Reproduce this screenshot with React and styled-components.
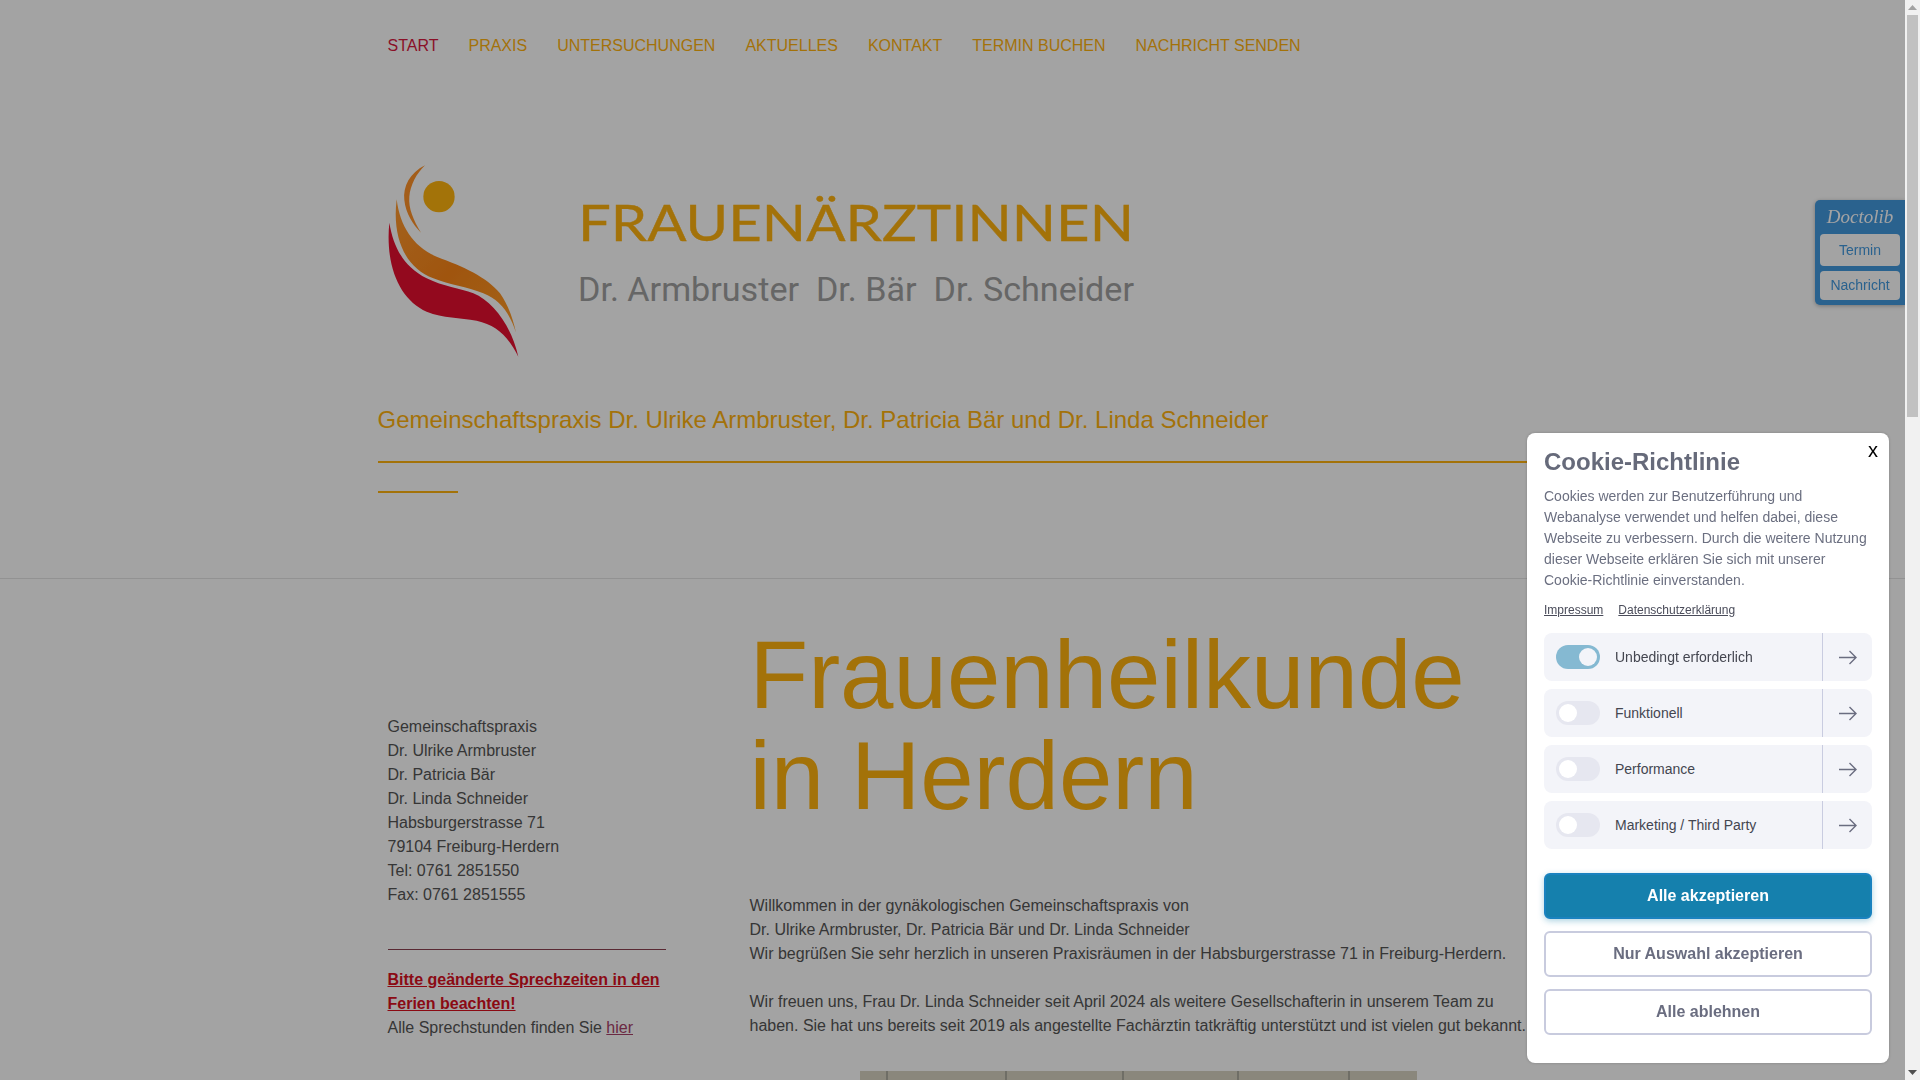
import React from "react";
import styled, { createGlobalStyle } from "styled-components";

const GlobalStyle = createGlobalStyle`
  body {
    margin: 0;
    background: #fff;
    color: #555;
    font-family: "Liberation Sans", Arial, sans-serif;
    font-size: 16px;
    line-height: 24px;
  }
`;

const Header = styled.header`
  padding-left: 377.5px;
  border-bottom: 1px solid #e4e4e4;
  height: 579px;
  box-sizing: border-box;
  overflow: hidden;
`;

const Nav = styled.nav`
  display: flex;
  gap: 30px;
  align-items: center;
  height: 92px;
  margin-left: 10px;
`;

const NavLink = styled.a`
  color: ${(p) => (p.$active ? "#d8193e" : "#ffb20f")};
  font-size: 16px;
  text-transform: uppercase;
`;

const LogoBox = styled.svg`
  display: block;
  width: 750px;
  height: 193px;
  margin: 73px 0 0 9.5px;
`;

const Claim = styled.h3`
  margin: 47px 0 0;
  color: #ffb20f;
  font-size: 24px;
  font-weight: normal;
  line-height: 30px;
`;

const Rule = styled.div`
  width: 1150px;
  margin-top: 26px;
  height: 2px;
  background: #ffb20f;
`;

const ShortRule = styled.div`
  margin-top: 28px;
  width: 80px;
  height: 2px;
  background: #ffb20f;
`;

const Content = styled.main`
  display: flex;
  padding-left: 377.5px;
`;

const Sidebar = styled.aside`
  width: 372px;
  box-sizing: border-box;
  padding: 136px 0 0 10px;
`;

const AddressLine = styled.div``;

const SideRule = styled.hr`
  width: 278px;
  margin: 42px 0 18px;
  border: 0;
  border-top: 1px solid #8c4050;
`;

const Notice = styled.strong`
  display: block;
  width: 279px;
  color: #d9101f;
  text-decoration: underline;
`;

const SoftLink = styled.a`
  color: #a84068;
  text-decoration: underline;
`;

const Article = styled.article`
  width: 780px;
  padding-top: 46px;
`;

const Title = styled.h1`
  margin: 0 0 67px;
  color: #ffb20f;
  font-size: 96px;
  font-weight: normal;
  line-height: 100.8px;
`;

const Paragraph = styled.p`
  margin: 0 0 24px;
`;

const Photo = styled.div`
  display: flex;
  width: 557px;
  height: 420px;
  margin: 33px 0 0 110.5px;
  background: #d8d4c2;
`;

const PhotoPane = styled.div`
  width: ${(p) => p.$w}px;
  box-sizing: border-box;
  border-right: 2px solid #aeada0;
`;

const Overlay = styled.div`
  position: fixed;
  inset: 0 15px 0 0;
  background: rgba(0, 0, 0, 0.36);
`;

const Doctolib = styled.div`
  position: fixed;
  top: 200px;
  right: 15px;
  display: flex;
  flex-direction: column;
  gap: 5px;
  width: 80px;
  padding: 0 5px 5px;
  border-radius: 5px 0 0 5px;
  background: #4299df;
  box-shadow: 0 1px 4px rgba(0, 0, 0, 0.3);
`;

const DoctolibName = styled.div`
  height: 29px;
  color: #fff;
  font-family: "Liberation Serif", serif;
  font-size: 19px;
  font-style: italic;
  line-height: 34px;
  text-align: center;
`;

const DoctolibButton = styled.a`
  display: block;
  height: ${(p) => p.$h}px;
  border-radius: 4px;
  background: #fff;
  color: #4299df;
  font-size: 14px;
  line-height: ${(p) => p.$h}px;
  text-align: center;
`;

const Modal = styled.div`
  position: fixed;
  right: 31px;
  bottom: 17px;
  width: 362px;
  height: 630px;
  box-sizing: border-box;
  padding: 13px 17px 0;
  border-radius: 8px;
  background: #fff;
  box-shadow: 0 0 3px rgba(0, 0, 0, 0.2);
`;

const Close = styled.button`
  position: absolute;
  top: 5px;
  right: 11px;
  padding: 0;
  border: 0;
  background: none;
  color: #000;
  font-family: "Liberation Sans", sans-serif;
  font-size: 20px;
  line-height: 24px;
`;

const ModalTitle = styled.h2`
  margin: 0;
  color: #666a7a;
  font-size: 24px;
  font-weight: bold;
  line-height: 32px;
`;

const ModalText = styled.p`
  margin: 8px 0 0;
  color: #6b6f80;
  font-size: 14px;
  line-height: 21px;
`;

const ModalLinks = styled.div`
  display: flex;
  gap: 15px;
  margin-top: 10px;
  font-size: 12px;
  line-height: 18px;
`;

const ModalLink = styled.a`
  color: #4a4c5a;
  text-decoration: underline;
`;

const Options = styled.div`
  display: flex;
  flex-direction: column;
  gap: 8px;
  margin-top: 14px;
`;

const OptionRow = styled.div`
  display: flex;
  align-items: center;
  height: 48px;
  border-radius: 8px;
  background: #f3f4f9;
`;

const Toggle = styled.span`
  display: flex;
  justify-content: ${(p) => (p.$on ? "flex-end" : "flex-start")};
  align-items: center;
  flex: none;
  width: 44px;
  height: 24px;
  box-sizing: border-box;
  margin-left: 12px;
  padding: 0 3px;
  border-radius: 12px;
  background: ${(p) => (p.$on ? "#85b9d2" : "#e6e7f0")};
`;

const Knob = styled.span`
  width: 18px;
  height: 18px;
  border-radius: 50%;
  background: ${(p) => (p.$on ? "#f3f4f9" : "#fff")};
`;

const OptionLabel = styled.span`
  flex: 1;
  margin-left: 15px;
  color: #444650;
  font-size: 14px;
`;

const OptionArrow = styled.span`
  display: flex;
  justify-content: center;
  align-items: center;
  width: 49px;
  height: 100%;
  border-left: 1px solid #c9cce0;
  color: #6a6d80;
`;

const Actions = styled.div`
  display: flex;
  flex-direction: column;
  gap: 12px;
  margin-top: 24px;
`;

const ActionButton = styled.button`
  height: 46px;
  border: 2px solid ${(p) => (p.$primary ? "#1a82bf" : "#c8cbde")};
  border-radius: 6px;
  background: ${(p) => (p.$primary ? "#1580ad" : "#fff")};
  box-shadow: ${(p) => (p.$primary ? "0 2px 6px rgba(21, 128, 173, 0.35)" : "none")};
  color: ${(p) => (p.$primary ? "#fff" : "#6a6d80")};
  font-family: "Liberation Sans", sans-serif;
  font-size: 16px;
  font-weight: bold;
`;

const ScrollTrack = styled.div`
  position: fixed;
  top: 0;
  right: 0;
  bottom: 0;
  display: flex;
  flex-direction: column;
  align-items: center;
  width: 15px;
  background: #f1f1f1;
`;

const ScrollEnd = styled.div`
  display: flex;
  justify-content: center;
  align-items: center;
  flex: none;
  height: 15px;
  color: ${(p) => (p.$down ? "#505050" : "#a3a3a3")};
  margin-top: ${(p) => (p.$down ? "auto" : "0")};
`;

const ScrollThumb = styled.div`
  width: 11px;
  height: 402px;
  background: #c1c1c1;
`;

const navItems = ["Start", "Praxis", "Untersuchungen", "Aktuelles", "Kontakt", "Termin buchen", "Nachricht senden"];
const address = [
  "Gemeinschaftspraxis",
  "Dr. Ulrike Armbruster",
  "Dr. Patricia Bär",
  "Dr. Linda Schneider",
  "Habsburgerstrasse 71",
  "79104 Freiburg-Herdern",
  "Tel: 0761 2851550",
  "Fax: 0761 2851555",
];
const options = ["Unbedingt erforderlich", "Funktionell", "Performance", "Marketing / Third Party"];
const panes = [28, 119, 117, 115, 111];

function Logo() {
  return (
    <LogoBox viewBox="0 0 750 193">
      <defs>
        <linearGradient id="flame" x1="0" y1="0" x2="1" y2="1">
          <stop offset="0" stopColor="#ff9a30" />
          <stop offset="0.5" stopColor="#fa8517" />
          <stop offset="1" stopColor="#ff9c28" />
        </linearGradient>
      </defs>
      <g transform="translate(-17 -15) scale(0.3333)">
        <circle cx="207" cy="140" r="47" fill="#ffb40f" />
        <path fill="#ff9228" d="M165 46C120 68 98 110 103 150C107 190 130 225 153 248C130 210 115 175 118 140C121 105 140 70 165 46Z" />
        <path fill="url(#flame)" d="M80 148C90 230 130 290 200 320C280 350 350 380 390 430C415 465 430 510 438 548C420 490 390 450 340 430C290 410 240 405 190 385C110 355 65 270 80 148Z" />
        <path fill="#e60f2f" d="M58 218C70 290 100 350 170 385C220 410 270 415 310 430C370 455 425 530 445 620C415 560 380 525 320 512C270 502 220 505 170 485C90 450 45 350 58 218Z" />
      </g>
      <text x="191" y="76" fontFamily="Lato, sans-serif" fontSize="50" fill="#ffb20f" stroke="#ffb20f" strokeWidth="0.4" textLength="556" lengthAdjust="spacingAndGlyphs">
        FRAUENÄRZTINNEN
      </text>
      <text x="191" y="136" fontFamily="Roboto, sans-serif" fontSize="33" fill="#a0a0a0" textLength="556" lengthAdjust="spacingAndGlyphs">
        Dr. Armbruster{"\u00A0\u00A0"}Dr. Bär{"\u00A0\u00A0"}Dr. Schneider
      </text>
    </LogoBox>
  );
}

function Arrow() {
  return (
    <svg width="18" height="15" viewBox="0 0 18 15" fill="none" stroke="currentColor" strokeWidth="1.4">
      <path d="M0 7.5H17M10.5 1L17 7.5L10.5 14" />
    </svg>
  );
}

function ScrollCaret({ down }) {
  return (
    <svg width="9" height="5" viewBox="0 0 9 5" fill="currentColor">
      <path d={down ? "M0 0H9L4.5 5Z" : "M0 5H9L4.5 0Z"} />
    </svg>
  );
}

export default function App() {
  return (
    <div>
      <GlobalStyle />
      <Header>
        <Nav>
          {navItems.map((item, i) => (
            <NavLink key={item} $active={i === 0}>
              {item}
            </NavLink>
          ))}
        </Nav>
        <Logo />
        <Claim>Gemeinschaftspraxis Dr. Ulrike Armbruster, Dr. Patricia Bär und Dr. Linda Schneider</Claim>
        <Rule />
        <ShortRule />
      </Header>
      <Content>
        <Sidebar>
          {address.map((line) => (
            <AddressLine key={line}>{line}</AddressLine>
          ))}
          <SideRule />
          <Notice>Bitte geänderte Sprechzeiten in den Ferien beachten!</Notice>
          Alle Sprechstunden finden Sie <SoftLink>hier</SoftLink>
        </Sidebar>
        <Article>
          <Title>
            Frauenheilkunde
            <br />
            in Herdern
          </Title>
          <Paragraph>
            Willkommen in der gynäkologischen Gemeinschaftspraxis von
            <br />
            Dr. Ulrike Armbruster, Dr. Patricia Bär und Dr. Linda Schneider
            <br />
            Wir begrüßen Sie sehr herzlich in unseren Praxisräumen in der Habsburgerstrasse 71 in Freiburg-Herdern.
          </Paragraph>
          <Paragraph>
            Wir freuen uns, Frau Dr. Linda Schneider seit April 2024 als weitere Gesellschafterin in unserem Team zu
            haben. Sie hat uns bereits seit 2019 als angestellte Fachärztin tatkräftig unterstützt und ist vielen gut
            bekannt.
          </Paragraph>
          <Photo>
            {panes.map((w) => (
              <PhotoPane key={w} $w={w} />
            ))}
          </Photo>
        </Article>
      </Content>

      <Doctolib>
        <DoctolibName>Doctolib</DoctolibName>
        <DoctolibButton $h={32}>Termin</DoctolibButton>
        <DoctolibButton $h={29}>Nachricht</DoctolibButton>
      </Doctolib>

      <Overlay />

      <ScrollTrack>
        <ScrollEnd>
          <ScrollCaret />
        </ScrollEnd>
        <ScrollThumb />
        <ScrollEnd $down>
          <ScrollCaret down />
        </ScrollEnd>
      </ScrollTrack>

      <Modal>
        <Close>x</Close>
        <ModalTitle>Cookie-Richtlinie</ModalTitle>
        <ModalText>
          Cookies werden zur Benutzerführung und Webanalyse verwendet und helfen dabei, diese Webseite zu verbessern.
          Durch die weitere Nutzung dieser Webseite erklären Sie sich mit unserer Cookie-Richtlinie einverstanden.
        </ModalText>
        <ModalLinks>
          <ModalLink>Impressum</ModalLink>
          <ModalLink>Datenschutzerklärung</ModalLink>
        </ModalLinks>
        <Options>
          {options.map((label, i) => (
            <OptionRow key={label}>
              <Toggle $on={i === 0}>
                <Knob $on={i === 0} />
              </Toggle>
              <OptionLabel>{label}</OptionLabel>
              <OptionArrow>
                <Arrow />
              </OptionArrow>
            </OptionRow>
          ))}
        </Options>
        <Actions>
          <ActionButton $primary>Alle akzeptieren</ActionButton>
          <ActionButton>Nur Auswahl akzeptieren</ActionButton>
          <ActionButton>Alle ablehnen</ActionButton>
        </Actions>
      </Modal>
    </div>
  );
}
